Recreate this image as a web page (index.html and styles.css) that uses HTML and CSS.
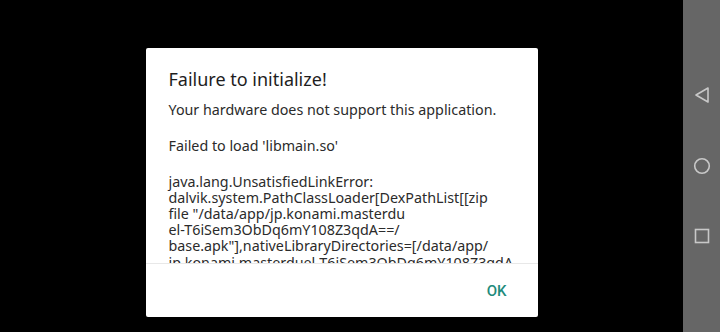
FILE: index.html
```html
<!DOCTYPE html>
<html>
<head>
<meta charset="utf-8">
<link rel="stylesheet" href="styles.css">
</head>
<body>
<div class="screen">
  <main class="stage">
    <div class="dialog">
      <h1 class="title">Failure to initialize!</h1>
      <div class="content">
        <p class="para">Your hardware does not support this application.</p>
        <p class="para">Failed to load 'libmain.so'</p>
        <p class="para">
          <span class="line">java.lang.UnsatisfiedLinkError:</span>
          <span class="line">dalvik.system.PathClassLoader[DexPathList[[zip</span>
          <span class="line">file "/data/app/jp.konami.masterdu</span>
          <span class="line">el-T6iSem3ObDq6mY108Z3qdA==/</span>
          <span class="line">base.apk"],nativeLibraryDirectories=[/data/app/</span>
          <span class="line">jp.konami.masterduel-T6iSem3ObDq6mY108Z3qdA</span>
        </p>
      </div>
      <div class="actions">
        <button class="btn">OK</button>
      </div>
    </div>
  </main>
  <nav class="navbar">
    <svg class="nav-icon" width="16" height="18" viewBox="0 0 16 18"><path d="M14 2 L2 9 L14 16 Z" fill="none" stroke="#c8c8c8" stroke-width="1.6" stroke-linejoin="round"/></svg>
    <svg class="nav-icon" width="18" height="18" viewBox="0 0 18 18"><circle cx="9" cy="9" r="7.3" fill="none" stroke="#c8c8c8" stroke-width="1.6"/></svg>
    <svg class="nav-icon" width="16" height="16" viewBox="0 0 16 16"><rect x="1.5" y="1.5" width="13" height="13" fill="none" stroke="#c8c8c8" stroke-width="1.6"/></svg>
  </nav>
</div>
</body>
</html>
```

FILE: styles.css
```css
html, body {
  margin: 0;
  padding: 0;
  background: #000;
}
.screen {
  display: flex;
  width: 720px;
  height: 332px;
  overflow: hidden;
}
.stage {
  flex: 1;
  display: flex;
  justify-content: center;
  align-items: flex-start;
  padding-top: 48px;
}
.dialog {
  width: 392px;
  height: 269px;
  background: #fff;
  border-radius: 2px;
  display: flex;
  flex-direction: column;
  font-family: "Noto Sans", Roboto, sans-serif;
}
.title {
  margin: 0;
  padding: 19px 23px 0;
  font-size: 18px;
  line-height: 24px;
  font-weight: 400;
  color: #1e1e1e;
}
.content {
  height: 173px;
  overflow: hidden;
  padding: 11px 23px 0;
  border-bottom: 1px solid #e8e8e8;
  box-sizing: border-box;
}
.para {
  margin: 0 0 19.6px;
  font-size: 14.3px;
  line-height: 16.2px;
  color: #2b2b2b;
}
.line {
  display: block;
  white-space: nowrap;
}
.actions {
  flex: 1;
  display: flex;
  justify-content: flex-end;
  align-items: center;
  padding-right: 31px;
}
.btn {
  border: 0;
  background: none;
  padding: 0;
  font-family: Roboto, "Noto Sans", sans-serif;
  font-size: 15px;
  font-weight: 500;
  color: #1f8c7c;
}
.navbar {
  width: 37px;
  background: #666666;
  display: flex;
  flex-direction: column;
  align-items: center;
  padding-top: 86px;
  gap: 53px;
  box-sizing: border-box;
}
.nav-icon {
  display: block;
}
```
